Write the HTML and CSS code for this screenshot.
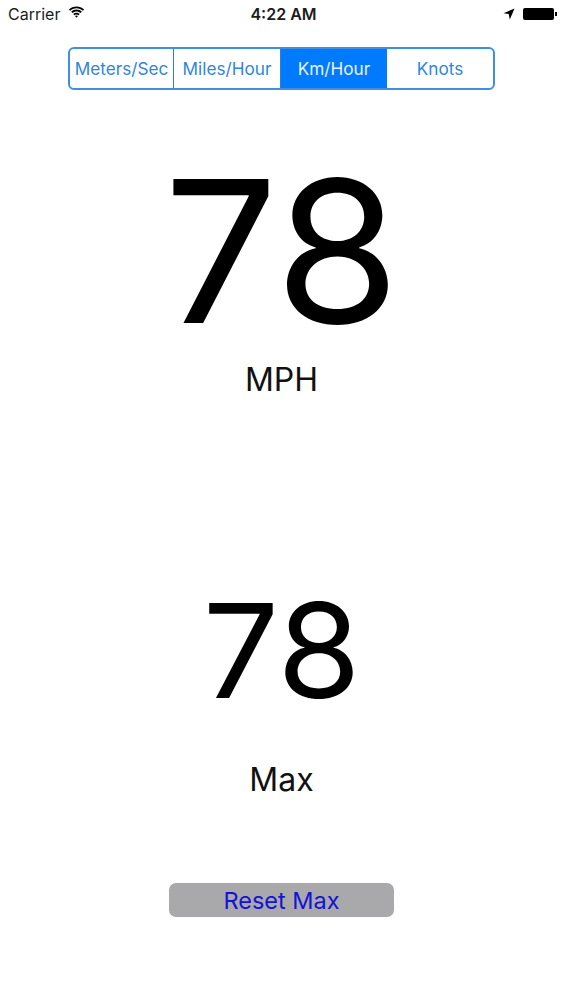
FILE: index.html
```html
<!DOCTYPE html>
<html lang="en">
<head>
    <meta charset="UTF-8">
    <meta name="viewport" content="width=device-width, initial-scale=1.0">
    <title>Speedometer</title>
    <link rel="stylesheet" href="styles.css">
</head>
<body>
    <div class="status-bar">
        <div class="status-left">
            <span>Carrier</span>
            <svg class="wifi" width="17" height="12" viewBox="0 0 17 12">
                <path d="M8.5 2.2c2.5 0 4.7 1 6.4 2.6l1.2-1.3C14.100 1.600 11.400.4 8.500.4S2.900 1.600.9 3.500l1.200 1.300C3.800 3.200 6 2.200 8.500 2.200z"/>
                <path d="M8.500 5.400c1.600 0 3 .6 4.100 1.600l1.200-1.300C12.400 4.400 10.500 3.600 8.500 3.600s-3.900.8-5.300 2.100l1.200 1.300c1.100-1 2.500-1.600 4.100-1.600z"/>
                <path d="M8.500 8.500c.8 0 1.500.3 2 .8l1.200-1.300C10.900 7.200 9.700 6.700 8.500 6.700s-2.400.5-3.200 1.300l1.200 1.300c.5-.5 1.200-.8 2-.8z"/>
                <path d="M8.500 11.700l1.500-1.600c-.4-.4-.9-.6-1.500-.6s-1.100.2-1.500.6z"/>
            </svg>
        </div>
        <div class="status-time">4:22 AM</div>
        <div class="status-right">
            <svg class="arrow" width="12" height="12" viewBox="0 0 12 12">
                <path d="M11.500.5L.5 5.200l5.200.9 1.100 5.400z"/>
            </svg>
            <div class="battery"><div class="battery-cap"></div></div>
        </div>
    </div>

    <div class="segments">
        <div class="segment">Meters/Sec</div>
        <div class="segment">Miles/Hour</div>
        <div class="segment active">Km/Hour</div>
        <div class="segment">Knots</div>
    </div>

    <div class="speed">78</div>
    <div class="speed-label">MPH</div>

    <div class="max">78</div>
    <div class="max-label">Max</div>

    <div class="reset">Reset Max</div>
</body>
</html>
```

FILE: styles.css
```css
*{
    margin: 0;
    padding: 0;
    box-sizing: border-box;
}

body{
    width: 563px;
    height: 1000px;
    background-color: #fff;
    color: #000;
    font-family: Inter, "Liberation Sans", sans-serif;
    overflow: hidden;
    display: flex;
    flex-direction: column;
    align-items: center;
}

.status-bar{
    width: 100%;
    height: 28px;
    padding: 0 9px 0 8px;
    display: grid;
    grid-template-columns: 1fr auto 1fr;
    align-items: center;
    font-size: 16px;
    color: #1c1c1c;
}

.status-left{
    display: flex;
    align-items: center;
    gap: 8px;
}

.wifi{
    margin-top: -4px;
}

.status-time{
    font-weight: 600;
    padding-left: 5px;
}

.status-right{
    display: flex;
    justify-content: flex-end;
    align-items: center;
    gap: 8px;
}

.battery{
    width: 31px;
    height: 12px;
    background-color: #000;
    border-radius: 2px;
    position: relative;
}

.battery-cap{
    position: absolute;
    right: -3px;
    top: 4px;
    width: 2px;
    height: 4px;
    background-color: #000;
}

.segments{
    width: 427px;
    height: 43px;
    margin-top: 19px;
    border: 2px solid #3f8fe0;
    border-radius: 6px;
    display: grid;
    grid-template-columns: 104px 107px 106px 106px;
    overflow: hidden;
}

.segment{
    display: flex;
    align-items: center;
    justify-content: center;
    font-size: 17.2px;
    color: #2f86dc;
    border-right: 1px solid #2f7fd0;
    white-space: nowrap;
}

.segment:last-child{
    border-right: none;
}

.segment.active{
    background-color: #007aff;
    color: #e8f2ff;
    border-right: none;
}

.speed{
    margin-top: 52px;
    font-size: 198px;
    font-weight: 400;
    line-height: 218px;
    transform: scaleX(1.02);
}

.speed-label{
    font-size: 32px;
    line-height: 40px;
    color: #111;
}

.max{
    margin-top: 166px;
    font-size: 131px;
    font-weight: 400;
    line-height: 170px;
    transform: scaleX(1.03);
}

.max-label{
    margin-top: 24px;
    font-size: 32px;
    line-height: 40px;
    color: #111;
}

.reset{
    width: 225px;
    height: 34px;
    margin-top: 83px;
    background-color: #a9a8aa;
    border-radius: 7px;
    display: flex;
    align-items: center;
    justify-content: center;
    font-size: 23.5px;
    color: #1313d8;
}
```
